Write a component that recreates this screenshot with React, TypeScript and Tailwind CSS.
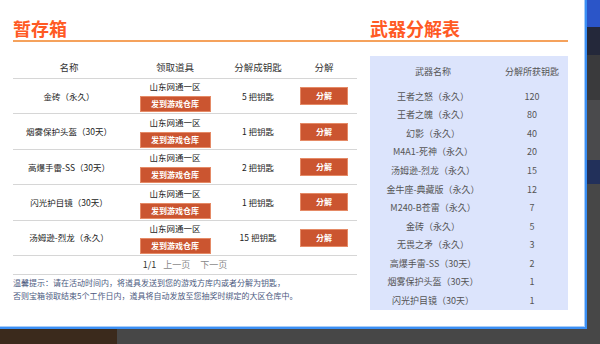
import React from "react";

const stash = [
  { name: "金砖（永久）", keys: "5 把钥匙" },
  { name: "烟雾保护头盔（30天）", keys: "1 把钥匙" },
  { name: "高爆手雷-SS（30天）", keys: "2 把钥匙" },
  { name: "闪光护目镜（30天）", keys: "1 把钥匙" },
  { name: "汤姆逊-烈龙（永久）", keys: "15 把钥匙" },
];

const table = [
  ["王者之怒（永久）", "120"],
  ["王者之魄（永久）", "80"],
  ["幻影（永久）", "40"],
  ["M4A1-死神（永久）", "20"],
  ["汤姆逊-烈龙（永久）", "15"],
  ["金牛座-典藏版（永久）", "12"],
  ["M240-B苍雷（永久）", "7"],
  ["金砖（永久）", "5"],
  ["无畏之矛（永久）", "3"],
  ["高爆手雷-SS（30天）", "2"],
  ["烟雾保护头盔（30天）", "1"],
  ["闪光护目镜（30天）", "1"],
];

function StashTable() {
  return (
    <div className="w-[344px]">
      <div className="flex h-[23px] items-center border-b border-[#d6d6d6] text-[9.5px] text-[#333]">
        <div className="w-[112px] text-center">名称</div>
        <div className="w-[100px] text-center">领取道具</div>
        <div className="w-[66px] text-center">分解成钥匙</div>
        <div className="w-[66px] text-center">分解</div>
      </div>
      {stash.map((row) => (
        <div key={row.name} className="flex h-[35.4px] items-stretch border-b border-[#d6d6d6] text-[8.5px] text-[#222]">
          <div className="flex w-[112px] items-center justify-center">{row.name}</div>
          <div className="flex w-[100px] flex-col items-center justify-end pb-[1px]">
            <div className="leading-[13px]">山东网通一区</div>
            <button className="mt-[3px] h-[16px] w-[71px] border border-[#e58a66] bg-[#cb5530] text-[8px] font-bold leading-[14px] text-white" type="button">
              发到游戏仓库
            </button>
          </div>
          <div className="flex w-[66px] items-center justify-center">{row.keys}</div>
          <div className="flex w-[66px] items-center justify-center">
            <button className="h-[18px] w-[48px] border border-[#e58a66] bg-[#cb5530] text-[8px] font-bold leading-[16px] text-white" type="button">
              分解
            </button>
          </div>
        </div>
      ))}
      <div className="flex h-[19px] items-center justify-center gap-[7px] border-b border-[#d6d6d6] text-[9px]">
        <span className="text-[#333]">1/1</span>
        <span className="text-[#888]">上一页</span>
        <span className="ml-[3px] text-[#888]">下一页</span>
      </div>
      <p className="mt-[1px] text-[8px] leading-[13px] text-[#4c5a80]">
        温馨提示：请在活动时间内，将道具发送到您的游戏方库内或者分解为钥匙，
        <br />
        否则宝箱领取结束5个工作日内，道具将自动发放至您抽奖时绑定的大区仓库中。
      </p>
    </div>
  );
}

function KeyTable() {
  return (
    <div className="h-[254px] w-[198px] bg-[#dce4fc] text-[9px] text-[#555]">
      <div className="flex h-[31px] items-center">
        <div className="w-[126px] text-center">武器名称</div>
        <div className="w-[72px] text-center">分解所获钥匙</div>
      </div>
      {table.map(([name, n]) => (
        <div key={name} className="flex h-[18.6px] items-center">
          <div className="w-[126px] text-center">{name}</div>
          <div className="w-[72px] text-center">{n}</div>
        </div>
      ))}
    </div>
  );
}

export default function App() {
  return (
    <div className="flex h-[344px] w-[600px] flex-col overflow-hidden bg-[#474747] font-['Noto_Sans_CJK_SC',sans-serif]">
      <div className="flex">
        <div className="bg-[#3a8ff5] pb-[2px] pr-[2px]">
          <div className="h-[327px] w-[585px] border-b border-r border-[#a9cdf7] bg-white pl-[13px] pr-[16px] pt-[16px]">
            <div className="flex gap-[13px] border-b-2 border-[#f5a25c]">
              <h1 className="w-[344px] text-[18px] font-bold leading-[24px] text-[#ff5a24]">暂存箱</h1>
              <h1 className="text-[18px] font-bold leading-[24px] text-[#ff5a24]">武器分解表</h1>
            </div>
            <div className="mt-[14px] flex gap-[13px]">
              <StashTable />
              <KeyTable />
            </div>
          </div>
        </div>
        <div className="flex flex-1 flex-col">
          <div className="h-[27px] bg-[#2b55c8]" />
          <div className="h-[28px] bg-[#24283a]" />
          <div className="h-[45px] bg-[#3a3a3c]" />
          <div className="h-[60px] bg-[#4a4a4c]" />
          <div className="h-[24px] bg-[#22305a]" />
          <div className="flex-1 bg-[#474747]" />
        </div>
      </div>
      <div className="flex flex-1">
        <div className="w-[117px] bg-[#3b2a1c]" />
        <div className="flex-1 bg-[#474747]" />
      </div>
    </div>
  );
}
